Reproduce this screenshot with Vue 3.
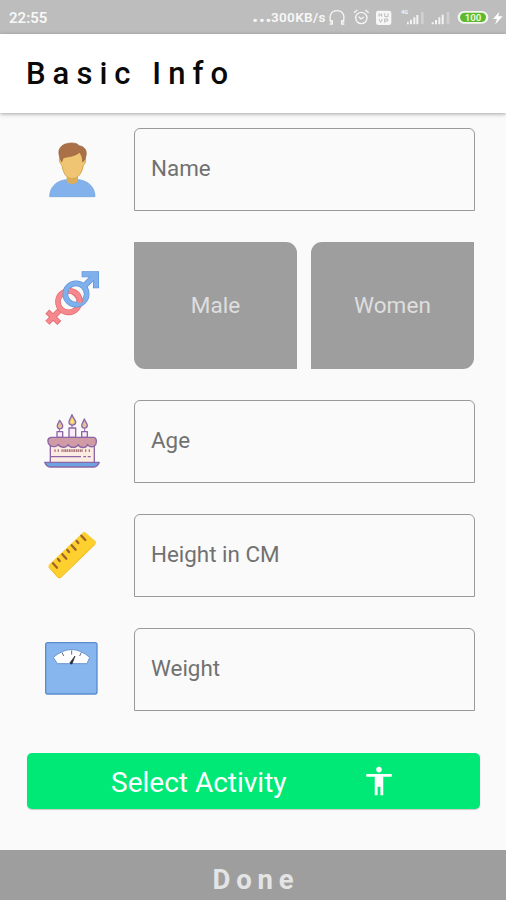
<script setup>
const ticks = [60, 70, 81, 92, 103, 114, 125, 136]
</script>

<template>
  <div class="screen">
    <div class="status">
      <span class="clock">22:55</span>
      <span class="dots">...</span>
      <span class="speed">300KB/s</span>
      <svg class="tray" viewBox="246 0 534 102">
        <g fill="none" stroke="#f6f6f6" stroke-width="4">
          <path d="M256 68C247 51 254 32 273 32S299 51 290 68" />
          <path d="M251 63h8v9h-8M295 63h-8v9h8" stroke-width="4" />
          <circle cx="346" cy="54" r="17" />
          <path d="M338 50l7 7 9-6M324 38l10-8M368 38l-10-8" />
        </g>
        <rect x="390" y="32" width="46" height="43" rx="7" fill="#f6f6f6" />
        <path d="M399 40v10M407 40v10M399 45h8M416 40v10h10M426 40v10M399 57l5 10 5-10M416 68v-11h9v6h-9" fill="none" stroke="#bdbdbd" stroke-width="3" />
        <text x="465" y="43" class="net">4G</text>
        <g fill="#f3f3f3">
          <path d="M483 65h5v8h-5zM492 59h6v14h-6zM502 52h6v21h-6zM511 45h6v28h-6z" />
          <path d="M557 67h6v6h-6zM567 60h6v13h-6zM577 52h6v21h-6zM587 44h6v29h-6z" />
          <path d="M525 36h8v37h-8zM602 36h8v37h-8z" fill="#d0d0d0" />
        </g>
        <rect x="635" y="33" width="92" height="38" rx="19" fill="#f3f7ef" />
        <rect x="642" y="38" width="78" height="28" rx="14" fill="#5dba2f" />
        <text x="681" y="62" class="battery">100</text>
        <path d="M760 35l-19 22h12l-6 17 23-25h-13z" fill="#fff" />
      </svg>
    </div>

    <header class="bar"><h1>Basic Info</h1></header>

    <main class="form">
      <div class="row">
        <svg class="icon" viewBox="0 -6 240 249">
          <path d="M44 200c0-27 18-47 48-51h40c30 4 48 24 48 51z" fill="#83b1ec" stroke="#6a9edf" stroke-width="2" />
          <path d="M95 133h34v20c-6 12-28 12-34 0z" fill="#dcae58" />
          <path d="M77 79c-6 1-5 21 4 27 3 22 13 40 31 40s29-18 33-40c8-5 9-25 2-28l-8-24H82z" fill="#efc473" stroke="#d9a64c" stroke-width="3" />
          <path d="M76 86C64 60 76 40 109 39c13 0 20 3 23 8 20 3 28 19 17 42l-6 7c0-13-3-20-9-29-13 11-31 13-49 16l-5 13z" fill="#aa7048" stroke="#976039" stroke-width="2" />
        </svg>
        <div class="field">Name</div>
      </div>

      <div class="row gender">
        <svg class="icon" viewBox="0 -54 240 381">
          <g fill="none">
            <path d="M78 147L37 188M37 155l36 34" stroke="#e26c72" stroke-width="17" />
            <path d="M78 147L37 188M39 157l32 30" stroke="#f5898d" stroke-width="12" />
            <circle cx="101" cy="125" r="32" stroke="#e26c72" stroke-width="17" />
            <circle cx="101" cy="125" r="32" stroke="#f5898d" stroke-width="13" />
            <path d="M146 80l36-36M140 43h43v42" stroke="#5b92d8" stroke-width="18" />
            <circle cx="123" cy="102" r="32" stroke="#5b92d8" stroke-width="17" />
            <circle cx="123" cy="102" r="32" stroke="#7fb0ec" stroke-width="13" />
            <path d="M146 80l36-36M142 43h41v40" stroke="#7fb0ec" stroke-width="14" />
            <path d="M104 93c18-1 32 14 31 34" stroke="#e26c72" stroke-width="17" />
            <path d="M102 93c20-1 34 14 32 35" stroke="#f5898d" stroke-width="13" />
          </g>
        </svg>
        <div class="choice male">Male</div>
        <div class="choice women">Women</div>
      </div>

      <div class="row">
        <svg class="icon" viewBox="0 -15 240 249">
          <g stroke="#8c66a6" stroke-width="4" stroke-linejoin="round">
            <path d="M46 117h132v57H46z" fill="#fbebe0" />
            <path d="M29 172h164c-4 9-8 14-15 14H44c-7 0-11-5-15-14z" fill="#6ca2e2" />
            <path d="M66 97V80h17v17zM102 97V69h20v28zM140 97V80h17v17z" fill="#faedf7" />
            <path d="M48 97h128c12 2 9 22 2 26-12 6-19-1-20-5-3 12-23 13-28 1-6 11-25 11-31 0-5 11-25 10-29-1-3 7-15 10-25 3-8-6-10-22 3-24z" fill="#d09ba5" />
            <path d="M74 46c-4 10-9 12-7 20 3 8 15 7 16-1 1-7-5-11-9-19zM111 29c-4 13-11 16-9 25 3 9 18 9 20-1 1-9-8-13-11-24zM148 42c-4 11-9 15-8 22 3 8 15 7 17-1 1-8-6-11-9-21z" fill="#e3c29a" />
            <path d="M46 155h92M145 155h8M158 155h9" fill="none" />
          </g>
          <path d="M112 40c-3 7-7 10-4 14 5 4 10-1 8-6z" fill="#ffe65d" />
          <path v-for="x in ticks" :key="x" :d="`M${x} 133v8M${x + 27} 133v8`" stroke="#ad7a80" stroke-width="4" />
          <path d="M73 79v-8M111 69v-9M149 79v-8" stroke="#8c66a6" stroke-width="3" />
        </svg>
        <div class="field">Age</div>
      </div>

      <div class="row">
        <svg class="icon" viewBox="0 -18 240 249">
          <path d="M44 132L143 38q6-4 10 1l29 25q3 4-1 8L78 172q-6 5-11 0l-26-32q-2-5 3-8z" fill="#fdd02f" />
          <path d="M41 141l28 31q4 3 9 0L181 72" fill="none" stroke="#f3b91e" stroke-width="3" />
          <path d="M54 130l12 13M82 103l12 13M110 76l12 13M139 47l12 13M69 117l5 6M97 90l5 6M125 63l5 6" fill="none" stroke="#9f6426" stroke-width="7" stroke-linecap="round" />
        </svg>
        <div class="field">Height in CM</div>
      </div>

      <div class="row">
        <svg class="icon" viewBox="0 -6 240 249">
          <rect x="32" y="38" width="154" height="154" rx="6" fill="#87b5ee" stroke="#5b8ccd" stroke-width="4" />
          <path d="M55 82q55-47 109 0l-8 19H67z" fill="#fff" stroke="#6b97d0" stroke-width="3" />
          <path d="M81 67l5 11M110 61v13M139 67l-5 11" stroke="#58708f" stroke-width="3" />
          <path d="M120 78l-15 20q0 5 6 4z" fill="#222b38" stroke="#222b38" stroke-width="2" />
        </svg>
        <div class="field">Weight</div>
      </div>
    </main>

    <button class="activity">
      <span>Select Activity</span>
      <svg class="person" viewBox="0 0 24 24"><path fill="#fff" d="M12 2c1.1 0 2 .9 2 2s-.9 2-2 2-2-.9-2-2 .9-2 2-2zm9 7h-6v13h-2v-6h-2v6H9V9H3V7h18v2z" /></svg>
    </button>

    <button class="done">Done</button>
  </div>
</template>

<style>
body { margin: 0; background: #fafafa; }
</style>

<style scoped>
.screen { width: 506px; height: 900px; display: flex; flex-direction: column; overflow: hidden; background: #fafafa; font-family: Roboto, "Liberation Sans", sans-serif; }
.status { height: 34px; flex: none; display: flex; align-items: center; background: #bdbdbd; color: #f8f8f8; line-height: 34px; }
.clock { width: 243px; padding-left: 9px; padding-top: 2px; font-size: 15px; font-weight: 600; }
.dots { width: 19px; font-size: 22px; line-height: 30px; height: 34px; letter-spacing: 0.3px; font-weight: 700; }
.speed { width: 57px; font-size: 13.5px; font-weight: 600; letter-spacing: 0.35px; }
.tray { width: 178px; height: 34px; flex: none; }
.net { font-size: 17px; font-weight: 700; fill: #f4f4f4; }
.battery { font-size: 29px; font-weight: 700; fill: #e5f7dd; text-anchor: middle; }
.bar { height: 79px; flex: none; position: relative; display: flex; align-items: center; padding-left: 26px; background: #fff; box-shadow: 0 1px 4px rgba(0, 0, 0, 0.35); }
h1 { margin: 0; font-size: 31px; line-height: 36px; font-weight: 500; letter-spacing: 7.05px; color: #090909; white-space: nowrap; }
.form { display: flex; flex-direction: column; gap: 31px; padding: 15px 31px 0 35px; }
.row { display: flex; height: 83px; }
.gender { height: 127px; }
.icon { width: 80px; height: 100%; flex: none; margin-right: 19px; }
.field { flex: 1; box-sizing: border-box; border: 1px solid #999; border-radius: 6px 6px 0 0; padding: 0 16px; line-height: 79px; font-size: 22.4px; color: #717171; }
.choice { width: 163px; line-height: 127px; text-align: center; font-size: 22.5px; letter-spacing: 0.1px; color: #dedede; background: #9e9e9e; }
.male { margin-right: 14px; border-radius: 0 11px 0 11px; }
.women { border-radius: 11px 0 11px 0; }
button { border: 0; font-family: inherit; padding: 0; }
.activity { height: 56px; flex: none; margin: 42px 26px 0 27px; padding-left: 84px; display: flex; align-items: center; border-radius: 5px; background: #00e976; color: #fff; font-size: 28px; box-shadow: 0 1px 1px rgba(0, 0, 0, 0.2); }
.activity span { width: 251px; text-align: left; padding-top: 2px; }
.person { width: 34px; height: 34px; }
.done { height: 50px; flex: none; margin-top: 41px; padding: 9px 0 0 6px; background: #9e9e9e; color: #e4e4e4; font-size: 27.5px; font-weight: 700; letter-spacing: 5.8px; }
</style>
